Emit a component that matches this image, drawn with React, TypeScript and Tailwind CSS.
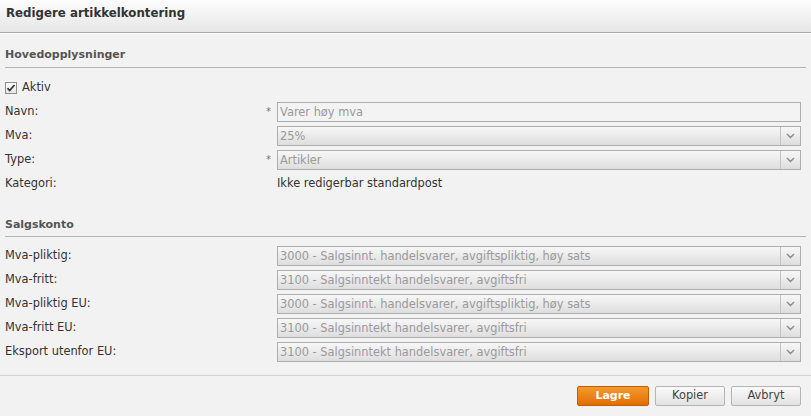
import React from 'react';

const font = { fontFamily: '"DejaVu Sans", Verdana, sans-serif' };

interface FieldRowProps {
  label: string;
  required?: boolean;
  children: React.ReactNode;
}

const FieldRow: React.FC<FieldRowProps> = ({ label, required, children }) => (
  <div className="flex h-6 items-center">
    <div className="w-[261px] shrink-0 text-[#333]">{label}</div>
    <div className="w-[11px] shrink-0 text-[#777] text-[10px] leading-none">{required ? '*' : ''}</div>
    <div className="flex-1 min-w-0">{children}</div>
  </div>
);

const Chevron = () => (
  <svg width="9" height="6" viewBox="0 0 9 6" fill="none">
    <path d="M1 1l3.5 3.5L8 1" stroke="#8a8a8a" strokeWidth="1.4" />
  </svg>
);

const SelectBox: React.FC<{ value: string }> = ({ value }) => (
  <div className="flex h-5 border border-[#adadad] bg-gradient-to-b from-[#f7f7f7] to-[#dedede]">
    <div className="flex-1 truncate px-[2px] leading-[18px] text-[#9a9a9a]">{value}</div>
    <div className="flex w-5 items-center justify-center border-l border-[#c2c2c2]">
      <Chevron />
    </div>
  </div>
);

const TextBox: React.FC<{ value: string }> = ({ value }) => (
  <div className="h-5 border border-[#adadad] bg-[#f3f3f3] px-[2px] leading-[18px] text-[#9a9a9a]">{value}</div>
);

const SectionTitle: React.FC<{ title: string }> = ({ title }) => (
  <div className="mx-[5px] border-b border-[#b5b5b5] pb-[3px] text-[11px] font-bold text-[#555]">{title}</div>
);

const Button: React.FC<{ label: string; primary?: boolean }> = ({ label, primary }) =>
  primary ? (
    <button className="h-5 w-[72px] rounded-[2px] border border-[#c25e00] bg-gradient-to-b from-[#f59a2c] to-[#e06d00] text-[11px] font-bold text-white">
      {label}
    </button>
  ) : (
    <button className="h-5 w-[70px] rounded-[2px] border border-[#b4b4b4] bg-gradient-to-b from-[#fafafa] to-[#e2e2e2] text-[11.4px] text-[#444]">
      {label}
    </button>
  );

export default function App() {
  const konto = [
    ['Mva-pliktig:', '3000 - Salgsinnt. handelsvarer, avgiftspliktig, høy sats'],
    ['Mva-fritt:', '3100 - Salgsinntekt handelsvarer, avgiftsfri'],
    ['Mva-pliktig EU:', '3000 - Salgsinnt. handelsvarer, avgiftspliktig, høy sats'],
    ['Mva-fritt EU:', '3100 - Salgsinntekt handelsvarer, avgiftsfri'],
    ['Eksport utenfor EU:', '3100 - Salgsinntekt handelsvarer, avgiftsfri'],
  ];

  return (
    <div className="h-[416px] w-[811px] bg-[#f2f2f2] text-[11.4px] text-[#333]" style={font}>
      <div className="h-[33px] border-b border-[#a9a9a9] bg-gradient-to-b from-[#fdfdfd] to-[#e6e6e6] px-[6px] pt-[5px] text-[11.8px] font-bold text-[#333]">
        Redigere artikkelkontering
      </div>
      <div className="h-px bg-white" />

      <div className="pt-[13px]">
        <SectionTitle title="Hovedopplysninger" />
        <div className="flex h-[20px] items-center gap-[5px] px-[5px] mt-[10px]">
          <svg width="12" height="12" viewBox="0 0 12 12">
            <defs>
              <linearGradient id="cb" x1="0" y1="0" x2="0" y2="1">
                <stop offset="0" stopColor="#ffffff" />
                <stop offset="1" stopColor="#e4e4e4" />
              </linearGradient>
            </defs>
            <rect x="0.5" y="0.5" width="11" height="11" fill="url(#cb)" stroke="#8e8e8e" />
            <path d="M2.5 6.2l2.2 2.3L9.5 3" stroke="#333" strokeWidth="1.8" fill="none" />
          </svg>
          <span>Aktiv</span>
        </div>
        <div className="pl-[5px] pr-[10px] mt-[2px]">
          <FieldRow label="Navn:" required>
            <TextBox value="Varer høy mva" />
          </FieldRow>
          <FieldRow label="Mva:">
            <SelectBox value="25%" />
          </FieldRow>
          <FieldRow label="Type:" required>
            <SelectBox value="Artikler" />
          </FieldRow>
          <FieldRow label="Kategori:">
            <div className="text-[#333]">Ikke redigerbar standardpost</div>
          </FieldRow>
        </div>
      </div>

      <div className="pt-[21px]">
        <SectionTitle title="Salgskonto" />
        <div className="pl-[5px] pr-[10px] mt-[7px]">
          {konto.map(([label, value]) => (
            <FieldRow key={label} label={label}>
              <SelectBox value={value} />
            </FieldRow>
          ))}
        </div>
      </div>

      <div className="mt-[11px] border-t border-[#d2d2d2]" />
      <div className="flex justify-end gap-[6px] pr-[10px] pt-[10px]">
        <Button label="Lagre" primary />
        <Button label="Kopier" />
        <Button label="Avbryt" />
      </div>
    </div>
  );
}
